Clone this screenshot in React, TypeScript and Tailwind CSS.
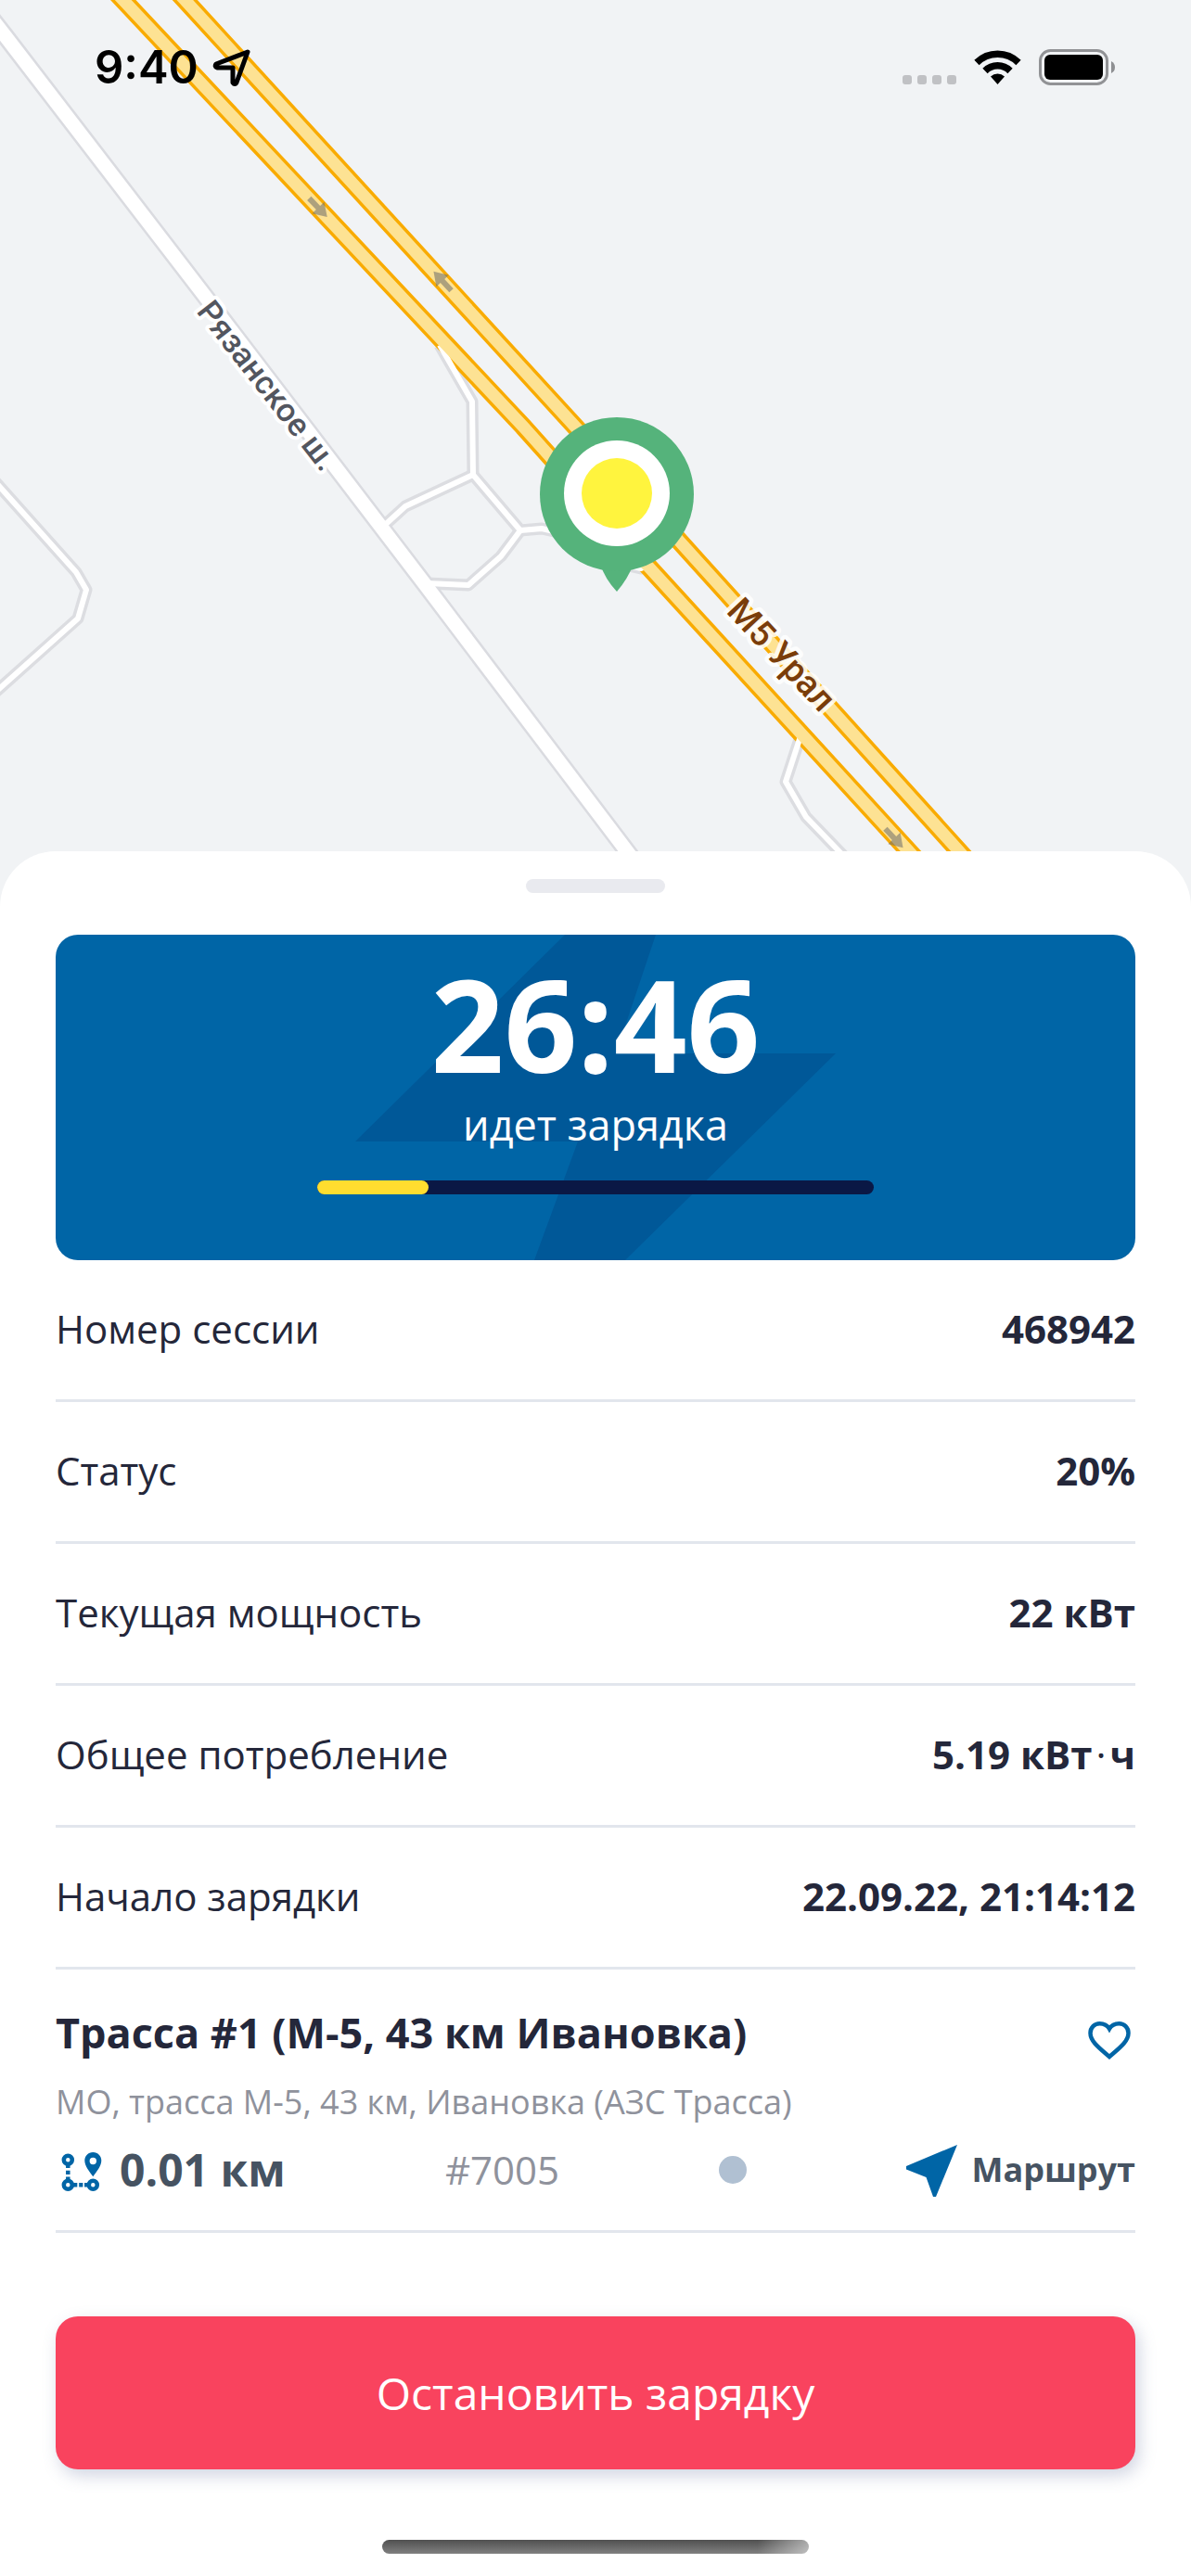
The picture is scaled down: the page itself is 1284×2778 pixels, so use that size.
import React from 'react';

const session: { label: string; value: React.ReactNode }[] = [
  { label: 'Номер сессии', value: '468942' },
  { label: 'Статус', value: '20%' },
  { label: 'Текущая мощность', value: '22 кВт' },
  {
    label: 'Общее потребление',
    value: (
      <>
        5.19 кВт<span className="mx-1 font-normal">·</span>ч
      </>
    ),
  },
  { label: 'Начало зарядки', value: '22.09.22, 21:14:12' },
];

const minorRoads = [
  'M474 372 L509 433 L510 512',
  'M510 512 L437 546 L415 566',
  'M510 512 L561 572 L584 570 L606 575 L660 606 L691 613 L702 608',
  'M561 572 L540 600 L505 631 L460 629',
  'M-10 514 L82 617 L93 636 L84 667 L-10 751',
  'M863 794 L847 843 L869 881 L920 934',
];

const highways = [
  'M114 -20 L564 460 L699 611 L998 938',
  'M181 -20 L620 460 L731 582 L1052 938',
];

const mainRoad = 'M-20 6 L5 38 L223 322 L458 630 L691 938';

const DirectionArrow: React.FC<{ x: number; y: number; angle: number }> = ({ x, y, angle }) => (
  <g transform={`translate(${x} ${y}) rotate(${angle})`} fill="#6b6b6b" fillOpacity="0.55">
    <path d="M-14 -3 H0 V-9 L14 0 L0 9 V3 H-14 Z" />
  </g>
);

const StationMap: React.FC = () => (
  <svg
    className="absolute inset-x-0 top-0 h-[980px] w-full"
    viewBox="0 0 1284 980"
    preserveAspectRatio="xMidYMin slice"
    fill="none"
    aria-label="Карта"
  >
    {minorRoads.map((d) => (
      <path key={d} d={d} stroke="#dcdde1" strokeWidth="13" strokeLinejoin="round" />
    ))}
    <path d={mainRoad} stroke="#dadbe0" strokeWidth="20" />
    <path d={mainRoad} stroke="#ffffff" strokeWidth="15" />
    {highways.map((d) => (
      <path key={d} d={d} stroke="#f9ab00" strokeWidth="20" />
    ))}
    {minorRoads.map((d) => (
      <path key={d} d={d} stroke="#ffffff" strokeWidth="6" strokeLinejoin="round" />
    ))}
    {highways.map((d) => (
      <path key={d} d={d} stroke="#fde293" strokeWidth="13" />
    ))}

    <DirectionArrow x={343} y={224} angle={46} />
    <DirectionArrow x={477} y={303} angle={227} />
    <DirectionArrow x={964} y={904} angle={47} />

    <text
      transform="translate(211 336) rotate(52)"
      className="font-[Roboto,sans-serif] text-[35px] font-medium"
      fill="#53565f"
      stroke="#ffffff"
      strokeWidth="8"
      strokeLinejoin="round"
      paintOrder="stroke"
    >
      Рязанское ш.
    </text>
    <text
      transform="translate(782 660) rotate(47)"
      className="font-[Roboto,sans-serif] text-[38px] font-medium"
      fill="#7a3d0a"
      stroke="#ffffff"
      strokeOpacity="0.85"
      strokeWidth="9"
      strokeLinejoin="round"
      paintOrder="stroke"
    >
      М5 Урал
    </text>

    <path d="M647 608 Q652 624 665 638 Q677 624 683 608 Z" fill="#55b37b" />
    <circle cx="665" cy="533" r="83" fill="#55b37b" />
    <circle cx="665" cy="532" r="57" fill="#ffffff" />
    <circle cx="665" cy="532" r="38" fill="#fff43e" />
  </svg>
);

const StatusBar: React.FC = () => (
  <div className="relative flex items-center justify-between pt-[43px] pr-[81px] pl-[102px] text-black">
    <div className="flex items-center gap-[15px]">
      <span className="font-[Inter,sans-serif] text-[49px] leading-[60px] font-semibold">9:40</span>
      <svg width="42" height="42" viewBox="0 0 42 42" fill="none">
        <path
          d="M38 4 L4 17 Q2 20 5 21 L22 21 L22 37 Q24 40 26 37 Z"
          stroke="currentColor"
          strokeWidth="5"
          strokeLinejoin="round"
        />
      </svg>
    </div>
    <svg width="231" height="40" viewBox="0 0 231 40">
      <g fill="#c0c1c4">
        <rect x="1" y="28" width="10" height="10" rx="3" />
        <rect x="17" y="28" width="10" height="10" rx="3" />
        <rect x="33" y="28" width="10" height="10" rx="3" />
        <rect x="49" y="28" width="10" height="10" rx="3" />
      </g>
      <g stroke="currentColor" strokeWidth="7.5" fill="none">
        <path d="M81 14.500 A32 32 0 0 1 126 14.500" />
        <path d="M90 23.500 A19 19 0 0 1 117 23.500" />
      </g>
      <path d="M96 29.500 A11 11 0 0 1 111 29.500 L103.500 38 Z" fill="currentColor" />
      <rect x="149.500" y="1.500" width="72" height="36" rx="11" fill="none" stroke="#919295" strokeWidth="3" />
      <rect x="154" y="6" width="63" height="27" rx="6" fill="currentColor" />
      <path d="M226 13 Q230 15 230 19.500 Q230 24 226 26 Z" fill="#8e8f92" />
    </svg>
  </div>
);

const ChargingCard: React.FC = () => (
  <section className="relative flex h-[351px] flex-col items-center overflow-hidden rounded-3xl bg-[#0065a6] text-white">
    <svg
      className="absolute top-0 left-1/2 -translate-x-1/2"
      width="518"
      height="351"
      viewBox="0 0 518 351"
      fill="#005898"
    >
      <path d="M226 0 H324 L281 128 H518 L291 351 H193 L240 223 H0 Z" />
    </svg>
    <div className="relative mt-[15px] text-[138px] leading-[160px] font-bold">26:46</div>
    <div className="relative text-[45px] leading-[60px]">идет зарядка</div>
    <div className="relative mt-[30px] h-[15px] w-[600px] rounded-full bg-[#0a1845]">
      <div className="h-full rounded-full bg-[#ffdd2f]" style={{ width: '20%' }} />
    </div>
  </section>
);

const RouteIcon: React.FC = () => (
  <svg width="54" height="54" viewBox="0 0 54 54" fill="none" stroke="#0065a6" strokeWidth="4.5">
    <circle cx="13.300" cy="16.300" r="4.500" />
    <circle cx="13.300" cy="43.300" r="4.500" />
    <circle cx="40.300" cy="43.300" r="4.500" />
    <path d="M13.300 21 V25 M13.300 27.700 V32 M13.300 34.500 V38" />
    <path d="M18 43.300 H23.300 M25.200 43.300 H29.400 M31 43.300 H36" />
    <path
      fillRule="evenodd"
      stroke="none"
      fill="#0065a6"
      d="M40.300 8 C45.500 8 49.300 12 49.300 17 C49.300 23 44 29 40.300 34.300 C36.600 29 31.300 23 31.300 17 C31.300 12 35 8 40.300 8 Z M40.300 13.800 A3.700 3.700 0 1 0 40.300 21.200 A3.700 3.700 0 1 0 40.300 13.800 Z"
    />
  </svg>
);

const StationInfo: React.FC = () => (
  <section className="border-b-3 border-[#e2e6ed] pt-[38px] pb-[35px]">
    <div className="flex items-start justify-between">
      <h2 className="text-[45px] leading-[60px] font-bold text-[#24273a]">Трасса #1 (М-5, 43 км Ивановка)</h2>
      <button type="button" aria-label="В избранное" className="mt-3">
        <svg width="54" height="54" viewBox="0 0 54 54" fill="none">
          <path
            d="M26 44 C15 34.500 5.500 27.500 5.500 18.500 C5.500 12.500 10 8.300 15.500 8.300 C20 8.300 24 10.500 26 14 C28 10.500 32 8.300 36.500 8.300 C42 8.300 46.500 12.500 46.500 18.500 C46.500 27.500 37 34.500 26 44 Z"
            stroke="#0065a6"
            strokeWidth="4.5"
          />
        </svg>
      </button>
    </div>
    <p className="mt-3 text-[36px] leading-[54px] text-[#8f929c]">МО, трасса М-5, 43 км, Ивановка (АЗС Трасса)</p>
    <div className="mt-4 flex items-center justify-between text-[#465362]">
      <div className="flex items-center gap-[15px]">
        <RouteIcon />
        <span className="text-[48px] leading-[60px] font-bold">0.01 км</span>
      </div>
      <span className="text-[42px] leading-[60px] text-[#8f929c]">#7005</span>
      <span className="size-[30px] rounded-full bg-[#b0c0d2]" />
      <a href="#route" className="flex items-center gap-[15px]">
        <svg width="55" height="60" viewBox="0 0 55 60" fill="#0065a6">
          <path d="M55 3 L0 26 V29.500 L21.500 38 L29 59 H32 Z" />
        </svg>
        <span className="text-[36px] leading-[60px] font-bold">Маршрут</span>
      </a>
    </div>
  </section>
);

const App: React.FC = () => {
  return (
    <div className="relative min-h-screen overflow-hidden bg-[#f1f3f5] font-['Open_Sans','Noto_Sans',sans-serif]">
      <StationMap />
      <div className="h-[918px]">
        <StatusBar />
      </div>

      <main className="relative rounded-t-[60px] bg-white px-[60px] pt-[30px] pb-6">
        <div className="mx-auto mb-[45px] h-[15px] w-[150px] rounded-full bg-[#e9eaef]" />
        <ChargingCard />

        <dl className="text-[42px] text-[#24273a]">
          {session.map((row) => (
            <div key={row.label} className="flex h-[153px] items-center justify-between border-b-3 border-[#e2e6ed] pb-1">
              <dt>{row.label}</dt>
              <dd className="font-bold">{row.value}</dd>
            </div>
          ))}
        </dl>

        <StationInfo />

        <button
          type="button"
          className="mt-[90px] block h-[165px] w-full rounded-3xl bg-[#f9435e] text-[48px] text-white shadow-[4px_7px_18px_rgba(90,105,150,0.28)]"
        >
          Остановить зарядку
        </button>

        <div className="mx-auto mt-[76px] h-[15px] w-[460px] rounded-full bg-[linear-gradient(to_right,transparent_88%,rgba(255,255,255,0.5)),linear-gradient(#505050,#808080)]" />
      </main>
    </div>
  );
};

export default App;
